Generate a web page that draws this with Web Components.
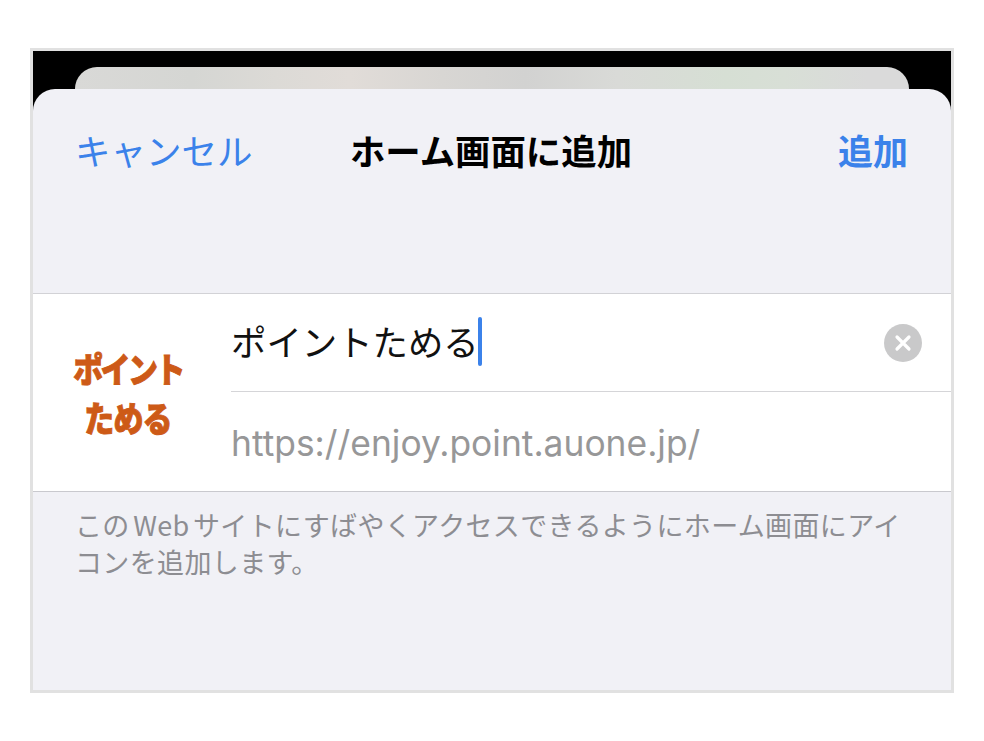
<!DOCTYPE html>
<html lang="ja"><head><meta charset="utf-8">
<style>
html,body{margin:0;background:#fff}
body{padding:48px 30px 0;font-family:"Noto Sans CJK JP","Noto Sans",sans-serif}
</style></head><body>
<ios-frame>
  <sheet-nav slot="sheet"><span slot="left">キャンセル</span><span slot="title">ホーム画面に追加</span><span slot="right">追加</span></sheet-nav>
  <add-form slot="sheet" value="ポイントためる" url="https://enjoy.point.auone.jp/"></add-form>
  <form-note slot="sheet">この Web サイトにすばやくアクセスできるようにホーム画面にアイコンを追加します。</form-note>
</ios-frame>
<script>
function def(name, html, init){
  customElements.define(name, class extends HTMLElement{
    constructor(){super();this.attachShadow({mode:'open'}).innerHTML=html;}
    connectedCallback(){init&&init(this);}
  });
}
def('ios-frame',`<style>
:host{display:block;width:918px;height:639px;border:3px solid #e1e1e1;background:#000;overflow:hidden}
.band{height:38px;padding:16px 42px 0;box-sizing:border-box}
.back{height:22px;border-radius:22px 22px 0 0;background:linear-gradient(90deg,#d9d9d7 0%,#d5d6d3 14%,#dcdad6 24%,#e1dcd8 33%,#d8d6d3 44%,#d2d2d1 54%,#d9dad7 65%,#d6dfd4 78%,#d8dfd6 85%,#dadada 95%)}
.sheet{height:601px;background:#f1f1f6;border-radius:22px 22px 0 0;overflow:hidden}
</style><div class="band"><div class="back"></div></div><div class="sheet"><slot name="sheet"></slot></div>`);
def('sheet-nav',`<style>
:host{display:grid;grid-template-columns:1fr auto 1fr;align-items:center;height:124px;padding:0 43px 0 42px;font-size:35.5px;line-height:48px;position:relative;top:-1px}
.l{color:#3b82ea;justify-self:start}
.t{color:#000;font-weight:700;font-size:35.4px;margin-left:-1px}
.r{color:#3b82ea;font-weight:700;font-size:35px;justify-self:end}
</style><div class="l"><slot name="left"></slot></div><div class="t"><slot name="title"></slot></div><div class="r"><slot name="right"></slot></div>`);
def('add-form',`<style>
:host{display:flex;margin-top:80px;height:199px;box-sizing:border-box;background:#fff;border-top:1.5px solid #d2d2d6;border-bottom:1.5px solid #c9c9ce}
.logo{flex:none;width:190px;display:flex;flex-direction:column;align-items:center;justify-content:center;padding-top:1px;color:#cd5a17;font-weight:900;font-size:30px;line-height:49px;box-sizing:border-box;-webkit-text-stroke:.8px #cd5a17}
.logo span{display:block;white-space:nowrap;transform:scaleY(1.16)}
.logo .a{letter-spacing:-2.6px}
.logo .b{letter-spacing:-.8px}
.fields{flex:1;display:flex;flex-direction:column;min-width:0;margin-left:8px}
.row{height:97px;display:flex;align-items:center;border-bottom:1.5px solid #d5d5d8;padding-right:29px}
.name{font-size:35.4px;color:#111;line-height:48px;white-space:nowrap;position:relative;top:-2px}
.caret{width:4px;height:49px;margin-left:-1px;border-radius:2px;background:#3b82ea;position:relative;top:-1px}
.clear{margin-left:auto;flex:none;display:block}
.url{flex:1;display:flex;align-items:center;padding-top:3px;font-family:Inter,"Liberation Sans",sans-serif;font-size:35.4px;color:#979798;white-space:nowrap}
</style><div class="logo"><span class="a">ポイント</span><span class="b">ためる</span></div>
<div class="fields"><div class="row"><span class="name"></span><span class="caret"></span>
<svg class="clear" width="38" height="38" viewBox="0 0 38 38"><circle cx="19" cy="19" r="19" fill="#c9c9ca"/><path d="M13 13L25 25M25 13L13 25" stroke="#fff" stroke-width="3.2" stroke-linecap="round"/></svg></div>
<div class="url"></div></div>`,el=>{
  el.shadowRoot.querySelector('.name').textContent=el.getAttribute('value');
  el.shadowRoot.querySelector('.url').textContent=el.getAttribute('url');
});
def('form-note',`<style>
:host{display:block;padding:14px 40px 0 42px;font-size:27px;line-height:37px;color:#8d8d92;word-spacing:-3px;letter-spacing:.36px}
</style><slot></slot>`);
</script>
</body></html>
